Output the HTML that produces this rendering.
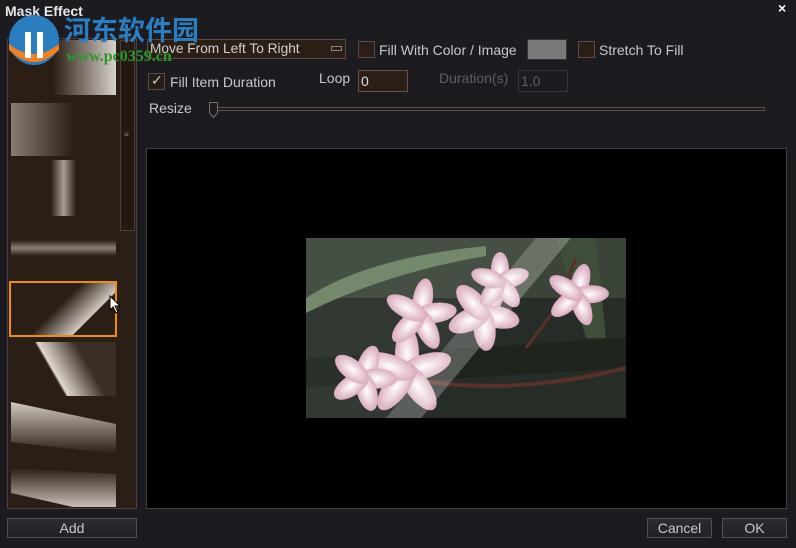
<!DOCTYPE html>
<html><head><meta charset="utf-8"><style>
*{margin:0;padding:0;box-sizing:border-box}
body{width:796px;height:548px;background:#1c1b20;font-family:"Liberation Sans",Arial,sans-serif;font-size:14px;color:#c8c8cc;position:relative;overflow:hidden}
.a{position:absolute}
.cb{position:absolute;width:17px;height:17px;border:1px solid #5a4a48;background:#2a1e15}
.btn{position:absolute;border:1px solid #5a4a4e;background:linear-gradient(#2c2b31,#222126);color:#c8c8cc;text-align:center;font-size:14px}
.th{position:absolute;left:11px;width:105px}
</style></head><body>
<div class="a" style="left:5px;top:3px;font-weight:bold;font-size:14px;color:#e6e6e6">Mask Effect</div>
<div class="a" style="left:778px;top:0px;font-weight:bold;font-size:14px;color:#fff">×</div>

<div class="a" style="left:7px;top:38px;width:130px;height:471px;border:1px solid #4a3e40;background:#2a1e15"></div>
<div class="a" style="left:120px;top:40px;width:15px;height:191px;border:1px solid #4a3e40;background:#241a13"></div>
<div class="a" style="left:124px;top:130px;font-size:8px;color:#888">≡</div>
<div class="th" style="top:40px;height:55px;background:linear-gradient(90deg,#2a1e15 40%,#d8d2cc)"></div>
<div class="th" style="top:103px;height:53px;background:linear-gradient(90deg,#8a7c72,#2a1e15 60%)"></div>
<div class="th" style="top:160px;height:56px;background:linear-gradient(90deg,#2a1e15 38%,#a89e96 50%,#2a1e15 62%)"></div>
<div class="th" style="top:240px;height:16px;background:linear-gradient(#2a1e15,#8a8078 50%,#2a1e15)"></div>
<div class="th" style="top:283px;height:52px;background:linear-gradient(135deg,#2a1e15 45%,#d0c8c0 72%,#2a1e15 73%)"></div>
<div class="a" style="left:9px;top:281px;width:108px;height:56px;border:2px solid #f08c10"></div>
<svg class="a" style="left:109px;top:295px" width="14" height="20" viewBox="0 0 14 20"><path d="M1 1 L1 15 L4 12 L7 18 L9 17 L6 11 L11 11 Z" fill="#fff" stroke="#000"/></svg>
<div class="th" style="top:342px;height:54px;background:linear-gradient(60deg,#2a1e15 40%,#e0d8d0 42%,#3a2e25 70%)"></div>
<svg class="a" style="left:11px;top:402px" width="105" height="105"><defs>
<linearGradient id="g1" x1="0" y1="0" x2="0" y2="1"><stop offset="0" stop-color="#d0c8c0"/><stop offset="1" stop-color="#2a1e15"/></linearGradient>
<linearGradient id="g2" x1="0" y1="1" x2="0" y2="0"><stop offset="0" stop-color="#c8c0b8"/><stop offset="1" stop-color="#2a1e15"/></linearGradient></defs>
<path d="M0 0 L105 22 L105 52 L0 40Z" fill="url(#g1)"/>
<path d="M0 66 L105 72 L105 105 L62 105 L0 91Z" fill="url(#g2)"/>
</svg>

<div class="btn" style="left:7px;top:518px;width:130px;height:20px;line-height:18px">Add</div>

<div class="a" style="left:147px;top:39px;width:199px;height:20px;border:1px solid #5a4a48;background:#2a1e15;padding-left:2px;line-height:18px;color:#d0d0d0;font-size:13.7px">Move From Left To Right</div>
<div class="a" style="left:331px;top:46px;width:11px;height:5px;border:1px solid #8a8080"></div>
<div class="cb" style="left:358px;top:41px"></div>
<div class="a" style="left:379px;top:42px">Fill With Color / Image</div>
<div class="a" style="left:527px;top:39px;width:40px;height:21px;border:1px solid #3a3238;background:#7a7a7a"></div>
<div class="cb" style="left:578px;top:41px"></div>
<div class="a" style="left:599px;top:42px">Stretch To Fill</div>

<div class="cb" style="left:148px;top:73px;background:#241d18"></div>
<div class="a" style="left:151px;top:72px;color:#ccc;font-size:14px">✓</div>
<div class="a" style="left:170px;top:74px">Fill Item Duration</div>
<div class="a" style="left:319px;top:70px">Loop</div>
<div class="a" style="left:358px;top:70px;width:50px;height:22px;border:1px solid #6a5048;background:#2a1e15;padding-left:2px;line-height:20px;color:#ddd">0</div>
<div class="a" style="left:439px;top:70px;color:#5e5e64">Duration(s)</div>
<div class="a" style="left:518px;top:70px;width:50px;height:22px;border:1px solid #3e3438;padding-left:2px;line-height:20px;color:#5e5e64">1.0</div>

<div class="a" style="left:149px;top:100px">Resize</div>
<div class="a" style="left:213px;top:107px;width:552px;height:4px;border:1px solid #5a4a4e"></div>
<svg class="a" style="left:208px;top:101px" width="12" height="18"><path d="M1.5 1.5H9.5V12L5.5 16.5L1.5 12Z" fill="#1c1b20" stroke="#7a6a6c"/></svg>

<div class="a" style="left:146px;top:148px;width:641px;height:361px;border:1px solid #4a3e42;background:#000"></div>
<svg class="a" style="left:306px;top:238px" width="320" height="180" viewBox="0 0 320 180">
<defs><radialGradient id="p" cx="0.5" cy="0.5" r="0.5"><stop offset="0" stop-color="#fff"/><stop offset="1" stop-color="#d9a8bc"/></radialGradient></defs>
<rect width="320" height="180" fill="#262c26"/>
<rect x="0" y="0" width="320" height="60" fill="#3a4438"/>
<path d="M0 60 Q60 20 180 8 L180 18 Q80 35 0 75Z" fill="#6c8262"/>
<path d="M0 120 L320 100 L320 130 L0 150Z" fill="#1e241c"/>
<path d="M250 0 L290 0 L300 100 L280 100Z" fill="#3e4e38"/>
<path d="M100 140 Q200 160 320 130" stroke="#5a302a" stroke-width="4" fill="none"/>
<path d="M220 110 L250 70 M250 70 L270 20" stroke="#5a302a" stroke-width="3" fill="none"/>
<g fill="url(#p)">
<g transform="translate(101,134)"><ellipse rx="12" ry="28" transform="rotate(0) translate(0,-18)"/><ellipse rx="12" ry="28" transform="rotate(72) translate(0,-18)"/><ellipse rx="12" ry="28" transform="rotate(144) translate(0,-18)"/><ellipse rx="12" ry="28" transform="rotate(216) translate(0,-18)"/><ellipse rx="12" ry="28" transform="rotate(288) translate(0,-18)"/></g>
<g transform="translate(57,140)"><ellipse rx="10" ry="20" transform="rotate(20) translate(0,-14)"/><ellipse rx="10" ry="20" transform="rotate(92) translate(0,-14)"/><ellipse rx="10" ry="20" transform="rotate(164) translate(0,-14)"/><ellipse rx="10" ry="20" transform="rotate(236) translate(0,-14)"/><ellipse rx="10" ry="20" transform="rotate(308) translate(0,-14)"/></g>
<g transform="translate(114,77)"><ellipse rx="10" ry="22" transform="rotate(10) translate(0,-15)"/><ellipse rx="10" ry="22" transform="rotate(82) translate(0,-15)"/><ellipse rx="10" ry="22" transform="rotate(154) translate(0,-15)"/><ellipse rx="10" ry="22" transform="rotate(226) translate(0,-15)"/><ellipse rx="10" ry="22" transform="rotate(298) translate(0,-15)"/></g>
<g transform="translate(177,76)"><ellipse rx="11" ry="22" transform="rotate(30) translate(0,-15)"/><ellipse rx="11" ry="22" transform="rotate(102) translate(0,-15)"/><ellipse rx="11" ry="22" transform="rotate(174) translate(0,-15)"/><ellipse rx="11" ry="22" transform="rotate(246) translate(0,-15)"/><ellipse rx="11" ry="22" transform="rotate(318) translate(0,-15)"/></g>
<g transform="translate(194,44)"><ellipse rx="9" ry="18" transform="rotate(0) translate(0,-12)"/><ellipse rx="9" ry="18" transform="rotate(72) translate(0,-12)"/><ellipse rx="9" ry="18" transform="rotate(144) translate(0,-12)"/><ellipse rx="9" ry="18" transform="rotate(216) translate(0,-12)"/><ellipse rx="9" ry="18" transform="rotate(288) translate(0,-12)"/></g>
<g transform="translate(271,57)"><ellipse rx="9" ry="19" transform="rotate(15) translate(0,-13)"/><ellipse rx="9" ry="19" transform="rotate(87) translate(0,-13)"/><ellipse rx="9" ry="19" transform="rotate(159) translate(0,-13)"/><ellipse rx="9" ry="19" transform="rotate(231) translate(0,-13)"/><ellipse rx="9" ry="19" transform="rotate(303) translate(0,-13)"/></g>
</g>
<path d="M0 0 L265 0 L115 180 L0 180Z" fill="#ffffff" opacity="0.06"/>
<path d="M230 0 L265 0 L115 180 L80 180Z" fill="#ffffff" opacity="0.2"/>
</svg>

<div class="btn" style="left:647px;top:518px;width:65px;height:20px;line-height:18px">Cancel</div>
<div class="btn" style="left:722px;top:518px;width:65px;height:20px;line-height:18px">OK</div>

<svg class="a" style="left:5px;top:14px" width="58" height="52"><circle cx="29" cy="26" r="25" fill="#2a7ec0"/><path d="M4 30 Q29 50 54 30 L54 36 Q29 60 4 36Z" fill="#f08020"/><rect x="20" y="18" width="6" height="26" fill="#fff"/><rect x="32" y="18" width="6" height="26" fill="#fff"/></svg>
<div class="a" style="left:64px;top:12px;font-family:'Noto Sans CJK SC',sans-serif;font-weight:bold;font-size:27px;color:#2a7ec0;line-height:34px">河东软件园</div>
<div class="a" style="left:66px;top:48px;font-family:'Liberation Serif',serif;font-weight:bold;font-size:16px;color:#2a9a2a">www.pc0359.cn</div>
</body></html>
